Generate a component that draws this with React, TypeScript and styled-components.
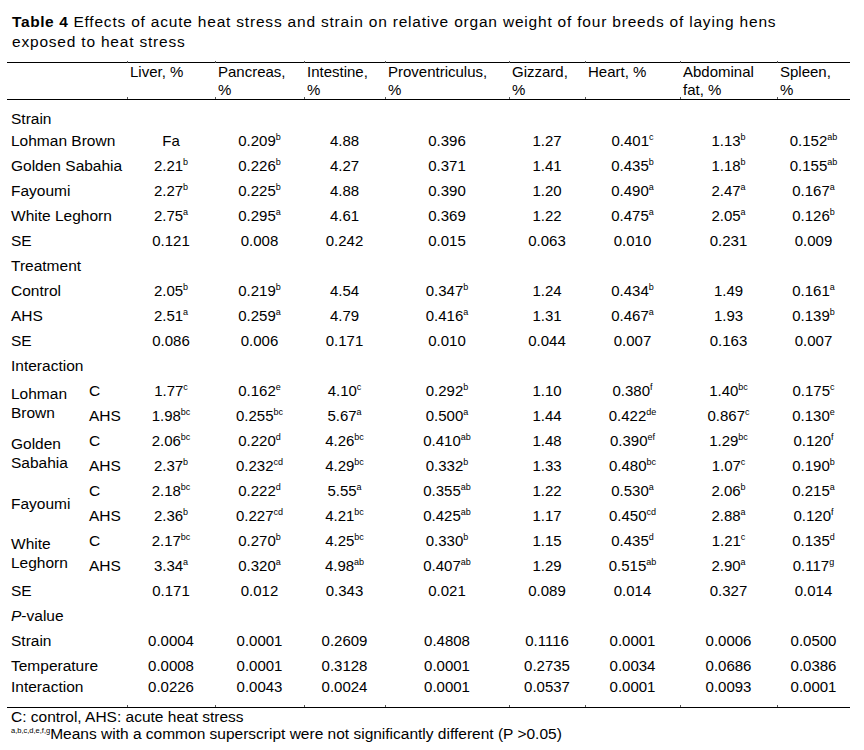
import React from 'react';
import styled, {createGlobalStyle, css} from 'styled-components';

const GlobalStyle = createGlobalStyle`
  body {
    margin: 0;
    background: #FFFFFF;
    color: #000000;
    font-family: "Liberation Sans", Arial, sans-serif;
  }
`;

const Page = styled.div`
  width: 843px;
  padding: 12px 14px 0 7px;
`;

const Title = styled.h1`
  margin: 0 0 10px 5px;

  font-size: 15.5px;
  font-weight: normal;
  line-height: 20px;
  letter-spacing: 0.8px;
`;

const TitleLine = styled.span`
  display: block;
  white-space: nowrap;
`;

const TitleLabel = styled.b`
  font-weight: bold;
  letter-spacing: 0.6px;
`;

const Table = styled.table`
  width: 843px;
  table-layout: fixed;
  border-collapse: separate;
  border-spacing: 0;

  font-size: 15px;
  line-height: 18px;
`;

const Col = styled.col<{$w: number}>`
  width: ${({$w}) => $w}px;
`;

const tick = css`
  content: '';
  position: absolute;
  left: 0;
  width: 1px;
  height: 2px;
  background: #555555;
`;

const HeadCell = styled.th<{$tick?: boolean}>`
  position: relative;
  padding: 0 0 0 3px;

  font-weight: normal;
  text-align: left;
  vertical-align: top;

  border-top: 1px solid #000000;
  border-bottom: 1px solid #000000;

  ${({$tick}) => $tick && css`
    &::before {
      ${tick}
      top: -2px;
    }
    &::after {
      ${tick}
      bottom: 0;
    }
  `}
`;

const LabelCell = styled.td`
  padding: 0 0 0 4px;
  font-size: 15.5px;
  white-space: nowrap;
`;

const GroupCell = styled.td`
  padding: 0 0 0 4px;
  font-size: 15.5px;
  line-height: 19px;
  vertical-align: middle;
`;

const SubCell = styled.td`
  padding: 0 0 0 4px;
  font-size: 15.5px;
`;

const ValueCell = styled.td`
  position: relative;
  padding: 0;
  text-align: center;
  white-space: nowrap;
`;

const Sup = styled.sup`
  font-size: 9px;
  line-height: 0;
  vertical-align: 6px;
`;

const Row = styled.tr<{$kind?: 'first' | 'last'}>`
  & > td {
    height: 25px;
    vertical-align: middle;
  }

  ${({$kind}) => $kind === 'first' && css`
    & > td {
      height: 28px;
      vertical-align: bottom;
    }
  `}

  ${({$kind}) => $kind === 'last' && css`
    & > td {
      height: 29px;
      vertical-align: top;
      border-bottom: 1px solid #000000;
    }
    & > ${ValueCell}::after {
      ${tick}
      bottom: 0;
    }
  `}
`;

const Notes = styled.div`
  padding-left: 4px;
  font-size: 15.5px;
  line-height: 17px;
`;

const NoteSup = styled.sup`
  font-size: 7.5px;
  line-height: 0;
  vertical-align: 6px;
`;

const widths = [78, 42, 88, 89, 81, 124, 76, 95, 97, 73];

const heads: React.ReactNode[] = [
  'Liver, %',
  <>Pancreas,<br />%</>,
  <>Intestine,<br />%</>,
  <>Proventriculus,<br />%</>,
  <>Gizzard,<br />%</>,
  'Heart, %',
  <>Abdominal<br />fat, %</>,
  <>Spleen,<br />%</>,
];

type Line =
  | {type: 'section'; label: React.ReactNode; first?: boolean}
  | {type: 'row'; label: string; values: string[]; last?: boolean}
  | {type: 'pair'; label: string; c: string[]; ahs: string[]};

const se = (s: string) => s.split(' ');

const lines: Line[] = [
  {type: 'section', label: 'Strain', first: true},
  {type: 'row', label: 'Lohman Brown', values: se('Fa 0.209^b 4.88 0.396 1.27 0.401^c 1.13^b 0.152^ab')},
  {type: 'row', label: 'Golden Sabahia', values: se('2.21^b 0.226^b 4.27 0.371 1.41 0.435^b 1.18^b 0.155^ab')},
  {type: 'row', label: 'Fayoumi', values: se('2.27^b 0.225^b 4.88 0.390 1.20 0.490^a 2.47^a 0.167^a')},
  {type: 'row', label: 'White Leghorn', values: se('2.75^a 0.295^a 4.61 0.369 1.22 0.475^a 2.05^a 0.126^b')},
  {type: 'row', label: 'SE', values: se('0.121 0.008 0.242 0.015 0.063 0.010 0.231 0.009')},
  {type: 'section', label: 'Treatment'},
  {type: 'row', label: 'Control', values: se('2.05^b 0.219^b 4.54 0.347^b 1.24 0.434^b 1.49 0.161^a')},
  {type: 'row', label: 'AHS', values: se('2.51^a 0.259^a 4.79 0.416^a 1.31 0.467^a 1.93 0.139^b')},
  {type: 'row', label: 'SE', values: se('0.086 0.006 0.171 0.010 0.044 0.007 0.163 0.007')},
  {type: 'section', label: 'Interaction'},
  {
    type: 'pair', label: 'Lohman Brown',
    c: se('1.77^c 0.162^e 4.10^c 0.292^b 1.10 0.380^f 1.40^bc 0.175^c'),
    ahs: se('1.98^bc 0.255^bc 5.67^a 0.500^a 1.44 0.422^de 0.867^c 0.130^e'),
  },
  {
    type: 'pair', label: 'Golden Sabahia',
    c: se('2.06^bc 0.220^d 4.26^bc 0.410^ab 1.48 0.390^ef 1.29^bc 0.120^f'),
    ahs: se('2.37^b 0.232^cd 4.29^bc 0.332^b 1.33 0.480^bc 1.07^c 0.190^b'),
  },
  {
    type: 'pair', label: 'Fayoumi',
    c: se('2.18^bc 0.222^d 5.55^a 0.355^ab 1.22 0.530^a 2.06^b 0.215^a'),
    ahs: se('2.36^b 0.227^cd 4.21^bc 0.425^ab 1.17 0.450^cd 2.88^a 0.120^f'),
  },
  {
    type: 'pair', label: 'White Leghorn',
    c: se('2.17^bc 0.270^b 4.25^bc 0.330^b 1.15 0.435^d 1.21^c 0.135^d'),
    ahs: se('3.34^a 0.320^a 4.98^ab 0.407^ab 1.29 0.515^ab 2.90^a 0.117^g'),
  },
  {type: 'row', label: 'SE', values: se('0.171 0.012 0.343 0.021 0.089 0.014 0.327 0.014')},
  {type: 'section', label: <><i>P</i>-value</>},
  {type: 'row', label: 'Strain', values: se('0.0004 0.0001 0.2609 0.4808 0.1116 0.0001 0.0006 0.0500')},
  {type: 'row', label: 'Temperature', values: se('0.0008 0.0001 0.3128 0.0001 0.2735 0.0034 0.0686 0.0386')},
  {type: 'row', label: 'Interaction', values: se('0.0226 0.0043 0.0024 0.0001 0.0537 0.0001 0.0093 0.0001'), last: true},
];

const Values: React.FC<{values: string[]}> = ({values}) => (
  <>
    {values.map((v, i) => {
      const [num, sup] = v.split('^');
      return (
        <ValueCell key={i}>
          {num}
          {sup && <Sup>{sup}</Sup>}
        </ValueCell>
      );
    })}
  </>
);

const renderLine = (line: Line, i: number) => {
  switch (line.type) {
    case 'section':
      return (
        <Row key={i} $kind={line.first ? 'first' : undefined}>
          <LabelCell colSpan={10}>{line.label}</LabelCell>
        </Row>
      );
    case 'row':
      return (
        <Row key={i} $kind={line.last ? 'last' : undefined}>
          <LabelCell colSpan={2}>{line.label}</LabelCell>
          <Values values={line.values} />
        </Row>
      );
    case 'pair':
      return (
        <React.Fragment key={i}>
          <Row>
            <GroupCell rowSpan={2}>{line.label}</GroupCell>
            <SubCell>C</SubCell>
            <Values values={line.c} />
          </Row>
          <Row>
            <SubCell>AHS</SubCell>
            <Values values={line.ahs} />
          </Row>
        </React.Fragment>
      );
  }
  return null;
};

const App: React.FunctionComponent = () => {
  return (
    <Page>
      <GlobalStyle />
      <Title>
        <TitleLine>
          <TitleLabel>Table 4 </TitleLabel>Effects of acute heat stress and strain on relative organ
          weight of four breeds of laying hens
        </TitleLine>
        <TitleLine>exposed to heat stress</TitleLine>
      </Title>
      <Table>
        <colgroup>
          {widths.map((w, i) => <Col key={i} $w={w} />)}
        </colgroup>
        <thead>
          <tr>
            <HeadCell colSpan={2} />
            {heads.map((h, i) => <HeadCell key={i} $tick>{h}</HeadCell>)}
          </tr>
        </thead>
        <tbody>
          {lines.map(renderLine)}
        </tbody>
      </Table>
      <Notes>
        <div>C: control, AHS: acute heat stress</div>
        <div><NoteSup>a,b,c,d,e,f,g</NoteSup>Means with a common superscript were not significantly different (P &gt;0.05)</div>
      </Notes>
    </Page>
  );
};

export default App;
